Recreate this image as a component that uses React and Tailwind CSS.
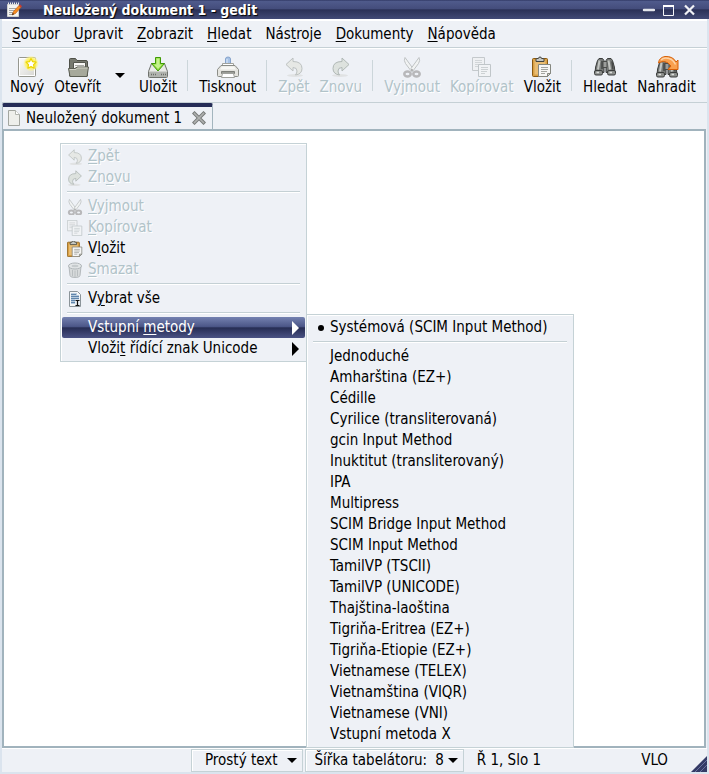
import React from 'react';
import clsx from 'clsx';

// ---------- icons ----------

// the small menu versions drop the empty margin of the 24px grid
const viewBoxFor = (size) => (size < 24 ? '2 2 20 20' : '0 0 24 24');

const EditorIcon = () => (
  <svg width="16" height="16" viewBox="0 0 16 16">
    <path d="M1.5 2.5h11v12h-11z" fill="#f4f4f2" stroke="#d0d0ce" />
    <path d="M2 1.5h11" stroke="#eee" strokeWidth="2" strokeDasharray="1 1" />
    <path d="M3 6.5h7M3 8.5h6M3 10.5h4M3 12.5h5" stroke="#a5a7a6" />
    <path d="M6 13l1.5-3.5L13 3.5l2 1.8-5.5 6.2z" fill="#f68b1f" stroke="#b8560b" strokeWidth=".6" />
    <path d="M13 3.5l1-1 2 1.8-1 1z" fill="#d93a2b" />
    <path d="M6 13l.8-2 1.2 1.1z" fill="#222" />
  </svg>
);

const NewIcon = () => (
  <svg width="24" height="24" viewBox="0 0 24 24">
    <defs>
      <radialGradient id="glow">
        <stop offset="0.45" stopColor="#fff04a" />
        <stop offset="0.75" stopColor="#fdf37a" stopOpacity=".8" />
        <stop offset="1" stopColor="#fff6a0" stopOpacity="0" />
      </radialGradient>
      <linearGradient id="sheet" x1="0" y1="0" x2="1" y2="1">
        <stop offset="0" stopColor="#fdfdfc" />
        <stop offset="1" stopColor="#d6d6d2" />
      </linearGradient>
    </defs>
    <rect x="3.5" y="2.5" width="17" height="19" rx="1" fill="url(#sheet)" stroke="#96978f" />
    <rect x="4.5" y="3.5" width="15" height="17" fill="none" stroke="#fff" />
    <circle cx="16" cy="8.500" r="8" fill="url(#glow)" />
    <path d="M16 3.5l1.600 3.200 3.500.5-2.500 2.500.6 3.500-3.200-1.600-3.100 1.600.6-3.500L11 7.200l3.500-.5z" fill="#fff" stroke="#ecd500" strokeWidth="1.200" strokeLinejoin="round" />
  </svg>
);

const OpenIcon = () => (
  <svg width="24" height="24" viewBox="0 0 24 24">
    <path d="M3.5 21V4.5q0-1 1-1h5l1.5 2h9q1.5 0 1.5 1.5v14z" fill="#777a70" stroke="#4e5048" />
    <path d="M7.5 7.500h12v8h-12z" fill="#f7f7f5" stroke="#555850" />
    <path d="M9 10.5h9M9 12.5h8" stroke="#a9aba5" />
    <path d="M2.5 13.5h7l1.5-1.500h11.500l-1.500 9.500h-17z" fill="#a6a99b" stroke="#5b5e53" strokeLinejoin="round" />
    <path d="M3.600 14.500H10l1.500-1.500h10" stroke="#cfd1c6" fill="none" />
  </svg>
);

const SaveIcon = () => (
  <svg width="24" height="24" viewBox="0 0 24 24">
    <path d="M2.5 16.500l3-8h13l3 8v5q0 1-1 1h-17q-1 0-1-1z" fill="#cfd1cd" stroke="#6f726d" />
    <path d="M3.5 16l2.700-6.500h11.600L20.500 16z" fill="#e9eae7" />
    <path d="M3 17h18v5H3z" fill="#b1b4af" />
    <path d="M5 19.5h5M15 19.5h5" stroke="#6b6e69" strokeWidth="1.500" strokeDasharray="1 1" />
    <path d="M9.5 2.5h5v6h4L12 16 5.500 8.500h4z" fill="#8fdc3c" stroke="#3f9a06" strokeLinejoin="round" />
    <path d="M10.500 3.500h3v6H16L12 14 8 9.500h2.500z" fill="#c5f28d" />
  </svg>
);

const PrintIcon = () => (
  <svg width="24" height="24" viewBox="0 0 24 24">
    <path d="M9.500 9V4q0-2 2.500-2t2.500 2v5z" fill="#a8c3e6" stroke="#86a3cb" />
    <path d="M11 4v4" stroke="#e1ecf8" />
    <path d="M6.500 8.500h11v4h-11z" fill="#fff" stroke="#a0a29d" />
    <path d="M5 10.500h14l3.500 4v6q0 1-1 1h-19q-1 0-1-1v-6z" fill="#e4e4df" stroke="#8b8d87" />
    <path d="M6 11.500h12l2 3H4z" fill="#f8f8f5" />
    <path d="M5.500 16.500h13v2h-13z" fill="#9b9d97" stroke="#7d7f79" />
    <path d="M6.500 18.500h11l1 4h-13z" fill="#fff" stroke="#a0a29d" />
  </svg>
);

const UndoIcon = ({ size = 24 }) => (
  <svg width={size} height={size} viewBox={viewBoxFor(size)}>
    <ellipse cx="13" cy="20.500" rx="8" ry="1.500" fill="#e0e2e3" />
    <path d="M11 3L4 9.500l7 6.500v-3.500q4 0 4 3.500 0 2-1.500 4 6.500-1 6.500-6.500Q20 6.500 11 6.500z" fill="#e6e8e5" stroke="#bcc1c0" strokeLinejoin="round" />
  </svg>
);

const RedoIcon = ({ size = 24 }) => (
  <svg width={size} height={size} viewBox={viewBoxFor(size)}>
    <ellipse cx="11" cy="20.500" rx="8" ry="1.500" fill="#e0e2e3" />
    <path d="M13 3l7 6.500-7 6.500v-3.500q-4 0-4 3.500 0 2 1.500 4Q4 19 4 13.500 4 6.500 13 6.500z" fill="#dde2de" stroke="#b0b8b5" strokeLinejoin="round" />
  </svg>
);

const CutIcon = ({ size = 24 }) => (
  <svg width={size} height={size} viewBox={viewBoxFor(size)}>
    <path d="M5 2.500q-1.500 3 .5 6l6 8 1.500-3z" fill="#f1f3f3" stroke="#bfc3c4" />
    <path d="M19 2.500q1.500 3-.5 6l-6 8-1.500-3z" fill="#f1f3f3" stroke="#bfc3c4" />
    <ellipse cx="7.500" cy="19" rx="3.200" ry="2.500" fill="none" stroke="#b8b8ba" strokeWidth="2.500" />
    <ellipse cx="16.500" cy="19" rx="3.200" ry="2.500" fill="none" stroke="#b8b8ba" strokeWidth="2.500" />
    <circle cx="12" cy="15" r="1" fill="#aaa" />
  </svg>
);

const CopyIcon = ({ size = 24 }) => (
  <svg width={size} height={size} viewBox={viewBoxFor(size)}>
    <path d="M2.500 2.500h12v13h-12z" fill="#eff1f3" stroke="#c4c9cc" />
    <path d="M5 5.500h7M5 7.500h7M5 9.500h4M5 11.500h4" stroke="#d2d6d8" />
    <path d="M8.500 9.500h12v12h-12z" fill="#f1f3f5" stroke="#c0c6c9" />
    <path d="M11 12.500h7M11 14.500h7M11 16.500h6M11 18.500h4" stroke="#ccd1d3" />
  </svg>
);

const PasteIcon = ({ size = 24 }) => (
  <svg width={size} height={size} viewBox={viewBoxFor(size)}>
    <rect x="2.500" y="3.500" width="15" height="18" rx="1" fill="#d9a044" stroke="#8a5a12" />
    <rect x="4.500" y="5.500" width="11" height="14" fill="#e9bd73" />
    <path d="M6 6.500V4.300q0-.8 1-.8h1.300q.3-1.500 1.700-1.500t1.700 1.500H13q1 0 1 .8v2.200z" fill="#c4c6c1" stroke="#40423d" />
    <path d="M8.500 9.500h12v9l-3 3h-9z" fill="#f6f6f5" stroke="#85877f" />
    <path d="M11 12.500h7M11 14.500h7M11 16.500h6M11 18.500h4" stroke="#a3a5a0" />
    <path d="M17.500 21.500v-3h3z" fill="#d3d4d0" stroke="#85877f" />
  </svg>
);

const Binoculars = () => (
  <g>
    <path d="M4.500 5.500l1.500-2h3.500l1.500 2v12h-9q0-5 2.500-12z" fill="#777a78" stroke="#3b3d3c" />
    <path d="M19.500 5.500l-1.500-2h-3.500l-1.500 2v12h9q0-5-2.500-12z" fill="#777a78" stroke="#3b3d3c" />
    <path d="M10 6.500h4v6h-4z" fill="#9b9d9b" stroke="#4a4c4a" />
    <path d="M6.500 5.500L5 14.500M15.500 5.500l1.500 9" stroke="#c2c5c2" strokeWidth="2" />
    <path d="M9 6v8M19 6.500l1 8" stroke="#464847" strokeWidth="1.500" />
    <rect x="1.500" y="15.500" width="8" height="4.500" rx="1.500" fill="#8b8e8b" stroke="#3b3d3c" />
    <rect x="14.500" y="15.500" width="8" height="4.500" rx="1.500" fill="#8b8e8b" stroke="#3b3d3c" />
    <path d="M3.500 17.500h2.500M16.500 17.500h2.500" stroke="#dcdedc" strokeWidth="1.500" />
  </g>
);

const FindIcon = () => (
  <svg width="24" height="24" viewBox="0 0 24 24">
    <Binoculars />
  </svg>
);

const ReplaceIcon = () => (
  <svg width="24" height="24" viewBox="0 0 24 24">
    <g transform="translate(0 2)">
      <Binoculars />
    </g>
    <path d="M3.500 8Q4 2.500 10 1.500q8-.5 11 5.500l2-2v9.500H13l3-3.500q-3-4.500-7.500-4.500-2.500.2-5 1.500z" fill="#f9a04e" stroke="#d65f06" strokeLinejoin="round" />
    <path d="M6 5q3-3 8-1.500 4 1 6.500 6" stroke="#fdd2a5" fill="none" strokeWidth="1.500" />
  </svg>
);

const TrashIcon = () => (
  <svg width="16" height="16" viewBox="0 0 16 16">
    <path d="M2 4.500l1 9q0 2 5 2t5-2l1-9z" fill="#d7dadb" stroke="#b4b9bc" />
    <path d="M5.500 8v6M8 8.500V15M10.500 8v6" stroke="#b9bec0" />
    <ellipse cx="8" cy="4" rx="6.500" ry="3" fill="#e3e6e7" stroke="#b1b7ba" />
    <ellipse cx="8" cy="4" rx="3.500" ry="1.200" fill="#c6cbcd" />
  </svg>
);

const SelectAllIcon = () => (
  <svg width="16" height="16" viewBox="0 0 16 16">
    <path d="M2.500.5h8l3 3v12h-11z" fill="#f4f6f7" stroke="#8b9499" />
    <path d="M4 2h6v2h2v9H4z" fill="#b6cadd" />
    <path d="M4 3.500h5M4 5.500h8M4 7.500h8M4 9.500h4M4 11.500h4" stroke="#5f85ab" />
    <path d="M8 8.500h5v6H8z" fill="#e8eef4" />
    <path d="M8.500 9.500h4M8.500 14.500h4M10.500 9.500v5" stroke="#111" strokeWidth="1.200" />
  </svg>
);

const PageIcon = () => (
  <svg width="14" height="16" viewBox="0 0 14 16">
    <path d="M1.500.5h7l4 4v11h-11z" fill="#eeefeb" stroke="#a3a6a0" />
    <path d="M8.500.5v4h4" fill="#fff" stroke="#b3b6b0" />
  </svg>
);

const CloseIcon = () => (
  <svg width="14" height="14" viewBox="0 0 14 14">
    <path d="M2.500 2.500l9 9M11.500 2.500l-9 9" stroke="#777a79" strokeWidth="3.600" strokeLinecap="square" />
    <path d="M2.500 2.500l9 9M11.500 2.500l-9 9" stroke="#b0b2b1" strokeWidth="1.600" strokeLinecap="square" />
  </svg>
);

const DownArrow = () => (
  <svg width="10" height="5" viewBox="0 0 10 5">
    <path d="M0 0h10L5 5z" fill="currentColor" />
  </svg>
);

const RightArrow = () => (
  <svg width="7" height="14" viewBox="0 0 7 14">
    <path d="M0 0l7 7-7 7z" fill="currentColor" />
  </svg>
);

// ---------- data ----------

// "_" marks the letter that is the keyboard mnemonic
const menuBar = ['_Soubor', '_Upravit', '_Zobrazit', '_Hledat', 'Nás_troje', '_Dokumenty', '_Nápověda'];

const contextMenu = [
  { label: '_Zpět', icon: <UndoIcon size={16} />, disabled: true },
  { label: 'Zn_ovu', icon: <RedoIcon size={16} />, disabled: true },
  { separator: true },
  { label: '_Vyjmout', icon: <CutIcon size={16} />, disabled: true },
  { label: '_Kopírovat', icon: <CopyIcon size={16} />, disabled: true },
  { label: 'V_ložit', icon: <PasteIcon size={16} /> },
  { label: '_Smazat', icon: <TrashIcon />, disabled: true },
  { separator: true },
  { label: 'V_ybrat vše', icon: <SelectAllIcon /> },
  { separator: true },
  { label: 'Vstupní _metody', submenu: true, active: true },
  { label: 'Vloži_t řídící znak Unicode', submenu: true },
];

const inputMethods = [
  'Jednoduché',
  'Amharština (EZ+)',
  'Cédille',
  'Cyrilice (transliterovaná)',
  'gcin Input Method',
  'Inuktitut (transliterovaný)',
  'IPA',
  'Multipress',
  'SCIM Bridge Input Method',
  'SCIM Input Method',
  'TamilVP (TSCII)',
  'TamilVP (UNICODE)',
  'Thajština-laoština',
  'Tigriňa-Eritrea (EZ+)',
  'Tigriňa-Etiopie (EZ+)',
  'Vietnamese (TELEX)',
  'Vietnamština (VIQR)',
  'Vietnamese (VNI)',
  'Vstupní metoda X',
];

// ---------- pieces ----------

const Mnemonic = ({ text }) => {
  const i = text.indexOf('_');
  if (i < 0) return <span>{text}</span>;
  return (
    <span>
      {text.slice(0, i)}
      <span className="underline underline-offset-2 decoration-1">{text[i + 1]}</span>
      {text.slice(i + 2)}
    </span>
  );
};

const ToolButton = ({ icon, label, disabled }) => (
  <button
    disabled={disabled}
    className={clsx(
      'flex flex-col items-center px-[5px] pt-[6px]',
      disabled && 'text-[#b1c3c9] [text-shadow:1px_1px_0_#fff]'
    )}
  >
    {icon}
    <span className="leading-4">{label}</span>
  </button>
);

const ToolSeparator = () => (
  <div className="my-[11px] mr-[6px] ml-[5px] w-px shrink-0 self-stretch bg-[#ccd6da]" />
);

const MenuSeparator = () => (
  <div role="separator" className="mx-[5px] my-[3px] h-[2px] border-b border-white bg-[#c4d0d4]" />
);

const MenuPanel = ({ className, children }) => (
  <div
    role="menu"
    className={clsx(
      'absolute border border-[#c5d2d6] bg-[#eef1f6] px-px py-[2px] shadow-[inset_1px_1px_0_#fff]',
      className
    )}
  >
    {children}
  </div>
);

const MenuItem = ({ label, icon, disabled, submenu, active }) => (
  <button
    role="menuitem"
    disabled={disabled}
    aria-haspopup={submenu ? 'menu' : undefined}
    className={clsx(
      'flex h-[21px] w-full items-center pr-[6px] pl-[5px] text-left',
      disabled && 'text-[#b1c3c9] [text-shadow:1px_1px_0_#fff]',
      active &&
        'rounded-xs bg-[linear-gradient(#7481b0_0%,#4c5788_45%,#262d54_52%,#4a5284_100%)] text-white'
    )}
  >
    <span className="flex w-[21px] shrink-0 items-center">{icon}</span>
    <span className="grow">
      <Mnemonic text={label} />
    </span>
    {submenu && <RightArrow />}
  </button>
);

const RadioItem = ({ label, checked }) => (
  <button role="menuitemradio" aria-checked={!!checked} className="flex h-[21px] w-full items-center text-left">
    <span className="flex w-[22px] shrink-0 justify-center pl-1">
      {checked && <span className="size-[6px] rounded-full bg-black" />}
    </span>
    {label}
  </button>
);

const StatusCombo = ({ label, value }) => (
  <button
    aria-haspopup="listbox"
    className={clsx(
      'flex h-[23px] items-center border border-[#c5d2d6] pr-[5px] shadow-[inset_1px_1px_0_#fff]',
      value ? 'gap-1 pl-[9px]' : 'gap-[9px] pl-[13px]'
    )}
  >
    <span>{label}</span>
    {value && <span className="pl-1">{value}</span>}
    <DownArrow />
  </button>
);

export default function App() {
  return (
    <div className="relative flex min-h-screen flex-col border-x-[2px] border-b-[2px] border-[#dbe4ee] bg-[#eef1f6] font-['DejaVu_Sans_Condensed','DejaVu_Sans',sans-serif] text-[15px] leading-[21px] text-black select-none">
      {/* title bar */}
      <header className="-mx-[2px] flex h-[19px] items-center bg-[linear-gradient(#323a66_0%,#4f5a8b_8%,#444d7c_45%,#2b3157_52%,#424a76_100%)] pr-[13px] pl-[6px]">
        <EditorIcon />
        <h1 className="grow pt-[2px] pl-[21px] text-[14px] font-bold text-white [text-shadow:1px_1px_1px_#000]">
          Neuložený dokument 1 - gedit
        </h1>
        <div className="flex items-center gap-[8px]">
          <button aria-label="Minimalizovat">
            <svg width="13" height="12" viewBox="0 0 13 12">
              <path d="M2 6h10" stroke="#e4e6ec" strokeWidth="2.500" strokeLinecap="round" />
            </svg>
          </button>
          <button aria-label="Maximalizovat">
            <svg width="12" height="12" viewBox="0 0 12 12">
              <path d="M.5 1.500h10v10H.500z" fill="none" stroke="#f4f5f8" />
              <path d="M0 2h11" stroke="#fff" strokeWidth="2" />
            </svg>
          </button>
          <button aria-label="Zavřít">
            <svg width="13" height="12" viewBox="0 0 13 12">
              <path d="M2 1.500l9 9M11 1.500l-9 9" stroke="#f0f1f5" strokeWidth="2.200" />
            </svg>
          </button>
        </div>
      </header>

      {/* menu bar */}
      <nav className="flex h-[29px] items-center gap-[14px] border-t-2 border-b border-t-white border-b-[#c5d0d5] pl-[10px]">
        {menuBar.map((item) => (
          <button key={item}>
            <Mnemonic text={item} />
          </button>
        ))}
      </nav>

      {/* toolbar */}
      <div role="toolbar" className="flex h-[55px] items-start border-t border-b border-t-white border-b-[#c5d0d5] pl-[3px]">
        <ToolButton icon={<NewIcon />} label="Nový" />
        <ToolButton icon={<OpenIcon />} label="Otevřít" />
        <button aria-label="Nedávné soubory" className="flex w-7 items-center justify-center self-stretch">
          <DownArrow />
        </button>
        <ToolButton icon={<SaveIcon />} label="Uložit" />
        <ToolSeparator />
        <ToolButton icon={<PrintIcon />} label="Tisknout" />
        <ToolSeparator />
        <ToolButton icon={<UndoIcon />} label="Zpět" disabled />
        <ToolButton icon={<RedoIcon />} label="Znovu" disabled />
        <ToolSeparator />
        <ToolButton icon={<CutIcon />} label="Vyjmout" disabled />
        <ToolButton icon={<CopyIcon />} label="Kopírovat" disabled />
        <ToolButton icon={<PasteIcon />} label="Vložit" />
        <ToolSeparator />
        <ToolButton icon={<FindIcon />} label="Hledat" />
        <ToolButton icon={<ReplaceIcon />} label="Nahradit" />
      </div>

      {/* document tabs */}
      <div role="tablist" className="flex h-[26px]">
        <div
          role="tab"
          aria-selected="true"
          className="flex items-center rounded-t-xs border-t-4 border-r border-l border-t-[#252c57] border-r-[#a3b5be] border-l-[#a3b5be] pr-[6px] pl-1"
        >
          <PageIcon />
          <span className="pr-[10px] pl-[5px]">Neuložený dokument 1</span>
          <button aria-label="Zavřít dokument">
            <CloseIcon />
          </button>
        </div>
      </div>

      {/* text area */}
      <textarea
        aria-label="Neuložený dokument 1"
        className="mr-[1px] block grow resize-none border-2 border-[#a1b3bd] bg-white p-1 outline-none"
      />

      {/* status bar */}
      <footer className="flex h-[24px] items-start gap-[2px] border-t border-white pl-[189px] leading-[23px]">
        <StatusCombo label="Prostý text" />
        <StatusCombo label="Šířka tabelátoru:" value="8" />
        <span className="grow pl-[11px]">Ř 1, Slo 1</span>
        <span className="pr-[21px]">VLO</span>
        <svg width="16" height="16" viewBox="0 0 16 16" className="self-end">
          <path d="M0 16L16 0v16z" fill="#343b66" />
          <path d="M4 16L16 4M9 16l7-7" stroke="#6b739f" />
        </svg>
      </footer>

      {/* context menu with its open submenu */}
      <MenuPanel className="top-[143px] left-[58px] w-[247px]">
        {contextMenu.map((item, i) =>
          item.separator ? <MenuSeparator key={i} /> : <MenuItem key={i} {...item} />
        )}
      </MenuPanel>
      <MenuPanel className="top-[314px] left-[304px] w-[268px]">
        <RadioItem label="Systémová (SCIM Input Method)" checked />
        <MenuSeparator />
        {inputMethods.map((name) => (
          <RadioItem key={name} label={name} />
        ))}
      </MenuPanel>
    </div>
  );
}
